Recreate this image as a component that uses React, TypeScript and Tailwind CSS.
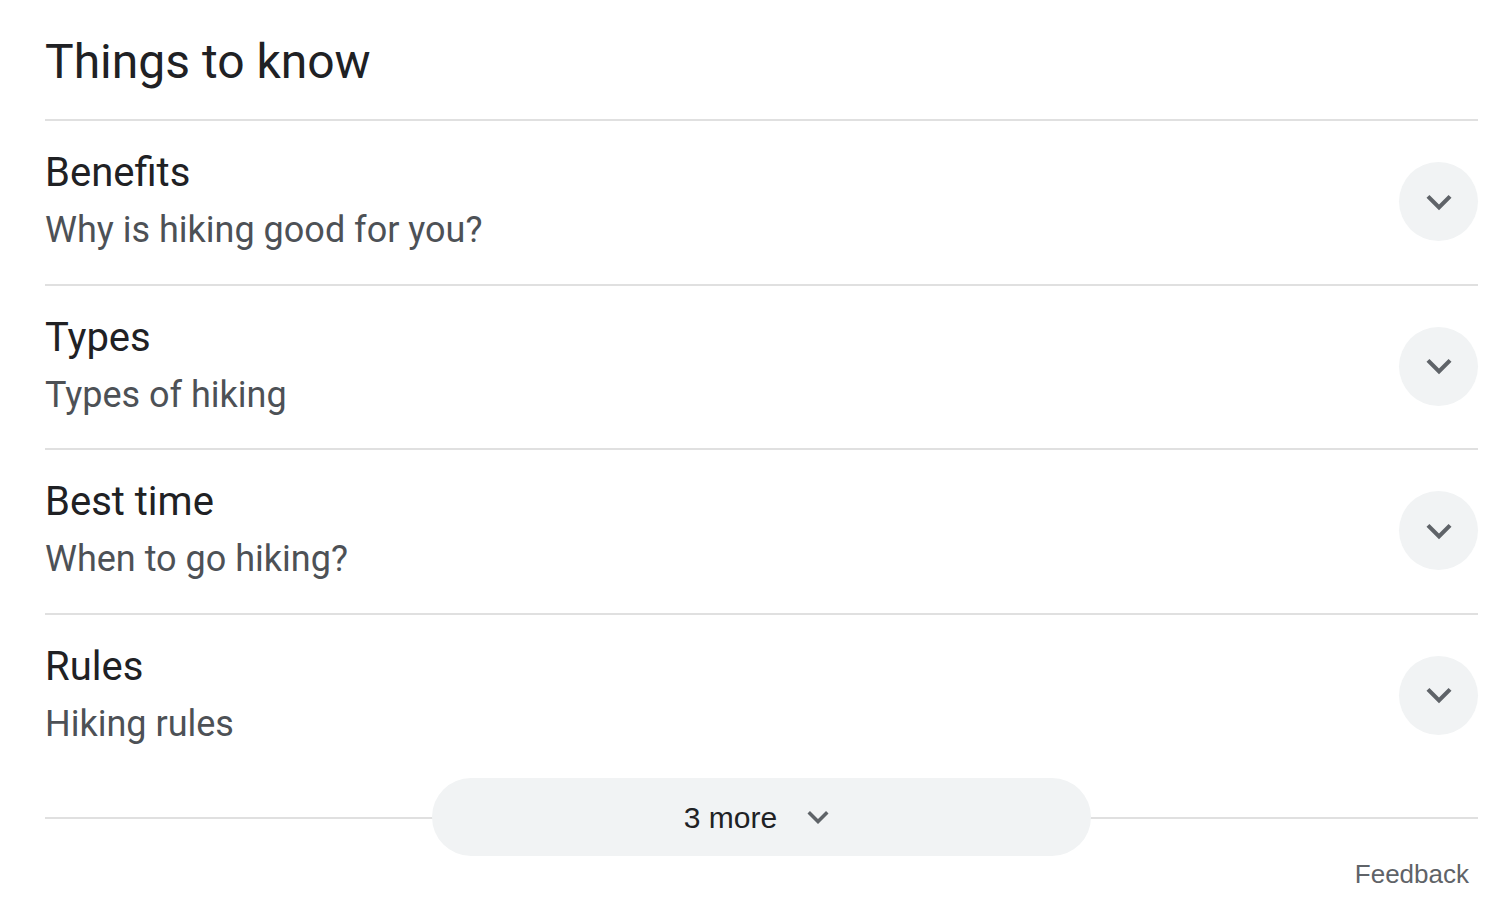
const items = [
	{ title: "Benefits", subtitle: "Why is hiking good for you?" },
	{ title: "Types", subtitle: "Types of hiking" },
	{ title: "Best time", subtitle: "When to go hiking?" },
	{ title: "Rules", subtitle: "Hiking rules" },
];

const ExpandMore: React.FC<{ className?: string }> = ({ className }) => (
	<svg viewBox="0 0 24 24" className={className} fill="currentColor">
		<path d="M16.59 8.59L12 13.17 7.41 8.59 6 10l6 6 6-6z" />
	</svg>
);

export default function App() {
	return (
		<div className="bg-white min-h-screen pl-[45px] pr-[20px] font-['Roboto',sans-serif]">
			<h2 className="pt-[34px] pb-[29px] text-[48px] leading-[56px] text-[#202124] font-normal">
				Things to know
			</h2>
			<div>
				{items.map(({ title, subtitle }, i) => (
					<div key={title} className="border-t-2 border-[#e0e0e0]">
						<div
							className={`flex items-center justify-between pt-[30px] ${
								i === items.length - 1 ? "pb-[32.5px]" : "pb-[31.5px]"
							}`}
						>
							<div className="flex flex-col gap-[13px]">
								<div className="text-[40px] leading-[44px] text-[#202124]">{title}</div>
								<div className="text-[36px] leading-[44px] text-[#4d5156]">{subtitle}</div>
							</div>
							<div className="w-[79px] h-[79px] rounded-full bg-[#f1f3f4] flex items-center justify-center text-[#5f6368]">
								<ExpandMore className="w-[50px] h-[50px]" />
							</div>
						</div>
					</div>
				))}
			</div>
			<div className="relative h-[78px] flex items-center justify-center">
				<div className="absolute left-0 right-0 top-[39px] border-t-2 border-[#e0e0e0]" />
				<button className="relative w-[659px] h-[78px] rounded-full bg-[#f1f3f4] flex items-center justify-center gap-[20px] font-['Liberation_Sans',Arial,sans-serif] text-[30px] text-[#202124]">
					<span>3 more</span>
					<ExpandMore className="w-[42px] h-[42px] text-[#5f6368]" />
				</button>
			</div>
			<div className="flex justify-end pr-[9px] pt-[3px]">
				<span className="font-['Liberation_Sans',Arial,sans-serif] text-[26px] leading-[30px] text-[#5f6368]">
					Feedback
				</span>
			</div>
		</div>
	);
}
